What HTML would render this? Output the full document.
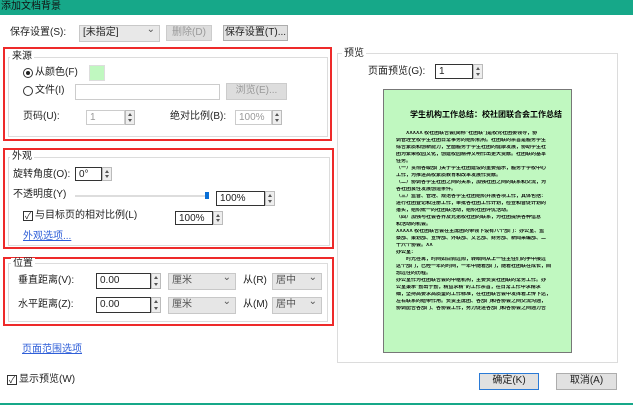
<!DOCTYPE html>
<html><head><meta charset="utf-8"><style>
*{margin:0;padding:0;box-sizing:border-box}
body{width:633px;height:413px;background:#fff;position:relative;overflow:hidden;font-family:"Liberation Sans","Noto Sans CJK SC",sans-serif;font-size:10px;line-height:12px;color:#222}
.a{position:absolute;white-space:nowrap;line-height:12px}
.title{left:0;top:0;width:633px;height:15px;background:#16a889;color:#111;font-size:10px;line-height:14px;padding-left:1px}
.red{position:absolute;border:2px solid #ee2a2a}
.grp{position:absolute;border:1px solid #dcdcdc}
.lbl{position:absolute;background:#fff;padding:0 2px;line-height:11px}
.tb{position:absolute;border:1px solid #aaa;background:#fff;line-height:13px;padding-left:3px}
.tbd{border-color:#ccc;color:#999}
.spin{position:absolute;width:10px;border:1px solid #bbb;background:#eee}
.spin:before{content:"";position:absolute;left:2px;top:2px;border:2.5px solid transparent;border-bottom:3px solid #555;border-top:0}
.spin:after{content:"";position:absolute;left:2px;bottom:2px;border:2.5px solid transparent;border-top:3px solid #555;border-bottom:0}
.btn{position:absolute;border:1px solid #adadad;background:#e1e1e1;text-align:center;line-height:14px}
.sel{position:absolute;border:1px solid #c8c8c8;background:#e6e6e6;line-height:14px;padding-left:3px;color:#555}
.sel:after{content:"⌄";position:absolute;right:4px;top:-3px;color:#555}
.radio{position:absolute;width:10px;height:10px;border:1px solid #333;border-radius:50%}
.chk{position:absolute;width:10px;height:10px;border:1px solid #333;font-size:9px;line-height:8px;text-align:center}
.link{color:#2f5fd8;text-decoration:underline}
.pg{position:absolute;left:383px;top:89px;width:189px;height:264px;background:#c0f8c0;border:1px solid #777}
.ln{position:absolute;left:12px;font-size:5px;line-height:5px;color:#111;font-weight:bold;white-space:nowrap;overflow:hidden;width:166px}
</style></head><body>
<div class="a title">添加文档背景</div>

<div class="a" style="left:10px;top:27px">保存设置(S):</div>
<div class="sel" style="left:79px;top:25px;width:81px;height:17px;color:#222;background:#e8e8e8">[未指定]</div>
<div class="btn" style="left:166px;top:25px;width:46px;height:16px;color:#999;background:#ddd;border-color:#ccc">删除(D)</div>
<div class="btn" style="left:223px;top:25px;width:65px;height:16px">保存设置(T)...</div>

<div class="red" style="left:3px;top:47px;width:329px;height:94px"></div>
<div class="grp" style="left:8px;top:57px;width:320px;height:80px"></div>
<div class="lbl" style="left:10px;top:51px">来源</div>
<div class="radio" style="left:23px;top:68px"><div style="position:absolute;left:2px;top:2px;width:4px;height:4px;background:#222;border-radius:50%"></div></div>
<div class="a" style="left:35px;top:67px">从颜色(F)</div>
<div class="a" style="left:89px;top:65px;width:16px;height:16px;background:#c0f8c0;border:1px solid #ddd"></div>
<div class="radio" style="left:23px;top:86px"></div>
<div class="a" style="left:35px;top:85px">文件(I)</div>
<div class="tb" style="left:75px;top:84px;width:145px;height:16px;border-color:#ccc"></div>
<div class="btn" style="left:226px;top:83px;width:61px;height:17px;color:#999;background:#ddd;border-color:#ccc">浏览(E)...</div>
<div class="a" style="left:23px;top:111px">页码(U):</div>
<div class="tb tbd" style="left:86px;top:110px;width:39px;height:15px">1</div>
<div class="spin" style="left:125px;top:110px;height:15px"></div>
<div class="a" style="left:170px;top:111px">绝对比例(B):</div>
<div class="tb tbd" style="left:235px;top:110px;width:37px;height:15px">100%</div>
<div class="spin" style="left:272px;top:110px;height:15px"></div>

<div class="red" style="left:3px;top:148px;width:331px;height:101px"></div>
<div class="grp" style="left:8px;top:157px;width:322px;height:89px"></div>
<div class="lbl" style="left:10px;top:151px">外观</div>
<div class="a" style="left:13px;top:169px">旋转角度(O):</div>
<div class="tb" style="left:75px;top:167px;width:27px;height:14px;border-color:#333">0°</div>
<div class="spin" style="left:102px;top:167px;height:14px"></div>
<div class="a" style="left:13px;top:189px">不透明度(Y)</div>
<div class="a" style="left:75px;top:195px;width:133px;height:2px;background:#ddd"></div>
<div class="a" style="left:205px;top:192px;width:4px;height:7px;background:#0a6fd6"></div>
<div class="tb" style="left:216px;top:191px;width:49px;height:15px;border-color:#333">100%</div>
<div class="spin" style="left:265px;top:191px;height:15px"></div>
<div class="chk" style="left:23px;top:211px">✓</div>
<div class="a" style="left:35px;top:210px">与目标页的相对比例(L)</div>
<div class="tb" style="left:175px;top:211px;width:38px;height:14px;border-color:#333">100%</div>
<div class="spin" style="left:213px;top:211px;height:14px"></div>
<div class="a link" style="left:23px;top:231px">外观选项...</div>

<div class="red" style="left:3px;top:257px;width:331px;height:69px"></div>
<div class="grp" style="left:8px;top:263px;width:320px;height:59px"></div>
<div class="lbl" style="left:11px;top:258px">位置</div>
<div class="a" style="left:18px;top:275px">垂直距离(V):</div>
<div class="tb" style="left:96px;top:273px;width:55px;height:16px;border-color:#333">0.00</div>
<div class="spin" style="left:151px;top:273px;height:16px"></div>
<div class="sel" style="left:168px;top:273px;width:68px;height:17px">厘米</div>
<div class="a" style="left:243px;top:275px">从(R)</div>
<div class="sel" style="left:272px;top:273px;width:50px;height:17px">居中</div>
<div class="a" style="left:18px;top:299px">水平距离(Z):</div>
<div class="tb" style="left:96px;top:297px;width:55px;height:16px;border-color:#333">0.00</div>
<div class="spin" style="left:151px;top:297px;height:16px"></div>
<div class="sel" style="left:168px;top:297px;width:68px;height:17px">厘米</div>
<div class="a" style="left:243px;top:299px">从(M)</div>
<div class="sel" style="left:272px;top:297px;width:50px;height:17px">居中</div>

<div class="a link" style="left:22px;top:344px">页面范围选项</div>
<div class="chk" style="left:7px;top:375px">✓</div>
<div class="a" style="left:19px;top:374px">显示预览(W)</div>

<div class="grp" style="left:337px;top:53px;width:281px;height:310px"></div>
<div class="lbl" style="left:342px;top:48px">预览</div>
<div class="a" style="left:368px;top:66px">页面预览(G):</div>
<div class="tb" style="left:435px;top:64px;width:38px;height:15px;border-color:#333">1</div>
<div class="spin" style="left:473px;top:64px;height:15px"></div>

<div class="pg">
<div class="a" style="left:26px;top:20px;font-size:8px;line-height:9px;font-weight:bold;color:#000">学生机构工作总结：校社团联合会工作总结</div>
<div class="ln" style="top:41px">　　XXXXX 校社团联合会(简称"社团联")是校党社团委领导，协</div>
<div class="ln" style="top:48px">调管理全校学生社团日常事务的组织机构。社团联的宗旨是服务学生</div>
<div class="ln" style="top:55px">综合素质和创新能力，全面服务于学生社团的健康发展，协助学生社</div>
<div class="ln" style="top:62px">团为繁荣校园文化，创建校园精神文明作出更大贡献。社团联的基本</div>
<div class="ln" style="top:69px">任务。</div>
<div class="ln" style="top:76px">（一）贯彻各级部门关于学生社团建设的重要指示，服务于学校中心</div>
<div class="ln" style="top:83px">工作，为推进高校素质教育和改革发展作贡献。</div>
<div class="ln" style="top:90px">（二）协调各学生社团之间的关系，加强社团之间的联系和交流，为</div>
<div class="ln" style="top:97px">各社团良性发展创造条件。</div>
<div class="ln" style="top:104px">（三）监督、管理、规范各学生社团组织开展各项工作，具体包括：</div>
<div class="ln" style="top:111px">进行社团登记和注册工作，审批各社团工作计划，检查和督促计划的</div>
<div class="ln" style="top:118px">落实，组织统一的社团联活动，组织社团评优活动。</div>
<div class="ln" style="top:125px">（四）加强与社会各界及兄弟校社团的联系，为社团提供各种信息</div>
<div class="ln" style="top:132px">和活动的机会。</div>
<div class="ln" style="top:139px">XXXXX 校社团联合会在主席团的带领下设有八个部门：办公室、监</div>
<div class="ln" style="top:146px">察部、策划部、宣传部、外联部、文艺部、财务部、新闻采编部、二</div>
<div class="ln" style="top:153px">十六个协会。XX</div>
<div class="ln" style="top:160px;color:#000">办公室：</div>
<div class="ln" style="top:167px">　　时光荏苒，时间如白驹过隙，转眼间从上一任主任们的手中接过</div>
<div class="ln" style="top:174px">这个部门，已经一年的时间，一年中随着部门，随着社团联在成长，回</div>
<div class="ln" style="top:181px">想过往的历程。</div>
<div class="ln" style="top:188px">办公室作为社团联合会的中枢机构，主要负责社团联的常务工作。办</div>
<div class="ln" style="top:195px">公室秉承"勤出于勤，精益求精"的工作宗旨，在日常工作中求精求</div>
<div class="ln" style="top:202px">细，坚持高要求高质量的工作标准，在社团联合会中发挥着上传下达，</div>
<div class="ln" style="top:209px">左右联系的纽带作用。负责主席团、各部门和各协会之间交流沟通，</div>
<div class="ln" style="top:216px">协调配合各部门、各协会工作，努力促进各部门和各协会之间通力合</div>
</div>

<div class="btn" style="left:479px;top:373px;width:60px;height:17px;border:1px solid #2a7ad6">确定(K)</div>
<div class="btn" style="left:556px;top:373px;width:61px;height:17px">取消(A)</div>

<div class="a" style="left:0;top:403px;width:633px;height:2px;background:#16a889"></div>
</body></html>
